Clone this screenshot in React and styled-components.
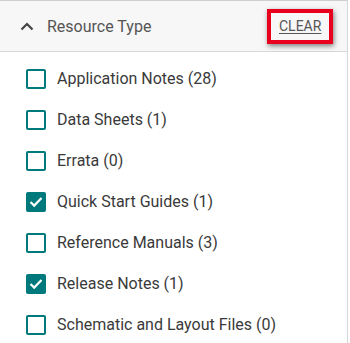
import React, { useState } from 'react';
import styled, { createGlobalStyle } from 'styled-components';

const GlobalStyle = createGlobalStyle`
  html, body {
    margin: 0;
    padding: 0;
    background: #fff;
  }
  body {
    font-family: Roboto, "Noto Sans", Arial, sans-serif;
  }
`;

const Panel = styled.section`
  width: 348px;
  height: 343px;
  border-top: 1px solid #cfcfcf;
  border-right: 1px solid #d6d6d6;
  box-sizing: border-box;
  background: #fff;
`;

const Header = styled.div`
  display: flex;
  align-items: center;
  justify-content: space-between;
  height: 51px;
  box-sizing: border-box;
  padding: 0 14px 0 20px;
  background: #f7f7f7;
  border-bottom: 1px solid #d9d9d9;
`;

const Title = styled.div`
  display: flex;
  align-items: center;
  gap: 13px;
  font-size: 16px;
  color: #555;
  svg {
    display: block;
  }
`;

const ClearButton = styled.button`
  font-family: inherit;
  font-size: 14px;
  color: #555;
  text-decoration: underline;
  text-underline-offset: 2px;
  background: none;
  border: 4px solid #e8001c;
  box-shadow: 1px 2px 5px rgba(0, 0, 0, 0.5);
  padding: 0 8px;
  width: 66px;
  height: 35px;
  box-sizing: border-box;
  cursor: pointer;
`;

const List = styled.ul`
  list-style: none;
  margin: 0;
  padding: 6px 0 0 26px;
`;

const Row = styled.li`
  display: flex;
  align-items: center;
  height: 41px;
  gap: 11px;
  font-size: 16px;
  color: #3a3a3a;
  cursor: pointer;
`;

const Box = styled.span`
  width: 20px;
  height: 20px;
  box-sizing: border-box;
  border: 2px solid #00797c;
  border-radius: 2px;
  background: ${p => (p.$checked ? '#00797c' : '#fff')};
  display: flex;
  align-items: center;
  justify-content: center;
  flex-shrink: 0;
`;

const items = [
  { label: 'Application Notes (28)', checked: false },
  { label: 'Data Sheets (1)', checked: false },
  { label: 'Errata (0)', checked: false },
  { label: 'Quick Start Guides (1)', checked: true },
  { label: 'Reference Manuals (3)', checked: false },
  { label: 'Release Notes (1)', checked: true },
  { label: 'Schematic and Layout Files (0)', checked: false },
];

function Chevron() {
  return (
    <svg width="14" height="9" viewBox="0 0 14 9">
      <polyline points="1.5,7.5 7,2 12.5,7.5" fill="none" stroke="#444" strokeWidth="2.2" />
    </svg>
  );
}

function Check() {
  return (
    <svg width="14" height="12" viewBox="0 0 14 12">
      <polyline points="1.5,6 5.2,9.6 12.5,2" fill="none" stroke="#fff" strokeWidth="2.2" />
    </svg>
  );
}

export default function App() {
  const [list, setList] = useState(items);
  const toggle = i =>
    setList(l => l.map((it, j) => (j === i ? { ...it, checked: !it.checked } : it)));

  return (
    <>
      <GlobalStyle />
      <Panel>
        <Header>
          <Title>
            <Chevron />
            Resource Type
          </Title>
          <ClearButton onClick={() => setList(l => l.map(it => ({ ...it, checked: false })))}>
            CLEAR
          </ClearButton>
        </Header>
        <List>
          {list.map((it, i) => (
            <Row key={it.label} onClick={() => toggle(i)}>
              <Box $checked={it.checked}>{it.checked && <Check />}</Box>
              {it.label}
            </Row>
          ))}
        </List>
      </Panel>
    </>
  );
}
